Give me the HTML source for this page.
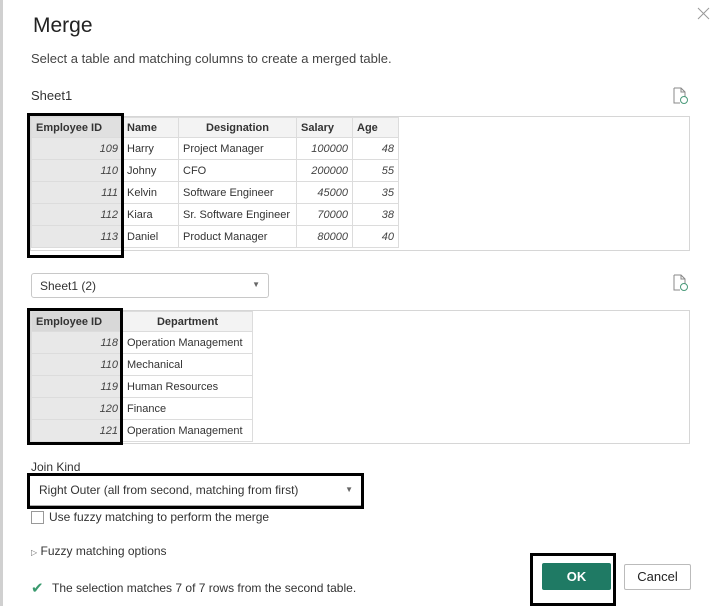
<!DOCTYPE html>
<html><head><meta charset="utf-8"><style>
*{margin:0;padding:0;box-sizing:border-box}
body{width:720px;height:606px;background:#fff;position:relative;overflow:hidden;font-family:"Liberation Sans",sans-serif;color:#333}
.a{position:absolute}
table{border-collapse:collapse;font-size:11px;position:absolute}
td,th{height:22px;border:1px solid #dcdcdc;padding:0 4px;white-space:nowrap}
th{height:20px;background:#f3f3f3;font-weight:bold;text-align:left;color:#333}
td.n{text-align:right;font-style:italic;color:#444}
td.id{background:#e8e8e8;text-align:right;font-style:italic;color:#444}
th.id{background:#e0e0e0}
.hl{position:absolute;border:3px solid #000}
</style></head><body>
<div class="a" style="left:0;top:0;width:3px;height:606px;background:#d0d0d0"></div>
<div class="a" style="left:33px;top:14px;font-size:21px;color:#222;font-weight:500">Merge</div>
<div class="a" style="left:31px;top:51px;font-size:13px;color:#444">Select a table and matching columns to create a merged table.</div>
<div class="a" style="left:31px;top:88px;font-size:13px;color:#333">Sheet1</div>
<svg class="a" style="left:697px;top:7px" width="13" height="13" viewBox="0 0 13 13"><path d="M1 1L12 12M12 1L1 12" stroke="#999" stroke-width="1"/></svg>
<svg class="a" style="left:673px;top:87px" width="16" height="18" viewBox="0 0 16 18"><path d="M1 1h7l4 4v5M1 1v15h6" fill="none" stroke="#888"/><path d="M8 1v4h4" fill="none" stroke="#888"/><circle cx="11" cy="13" r="3.5" fill="none" stroke="#4a9a7a"/></svg>
<svg class="a" style="left:673px;top:274px" width="16" height="18" viewBox="0 0 16 18"><path d="M1 1h7l4 4v5M1 1v15h6" fill="none" stroke="#888"/><path d="M8 1v4h4" fill="none" stroke="#888"/><circle cx="11" cy="13" r="3.5" fill="none" stroke="#4a9a7a"/></svg>

<div class="a" style="left:30px;top:116px;width:660px;height:135px;border:1px solid #d6d6d6"></div>
<table style="left:31px;top:117px">
<tr><th class="id" style="width:91px">Employee ID</th><th style="width:56px">Name</th><th style="width:118px;text-align:center">Designation</th><th style="width:56px">Salary</th><th style="width:46px">Age</th></tr>
<tr><td class="id">109</td><td>Harry</td><td>Project Manager</td><td class="n">100000</td><td class="n">48</td></tr>
<tr><td class="id">110</td><td>Johny</td><td>CFO</td><td class="n">200000</td><td class="n">55</td></tr>
<tr><td class="id">111</td><td>Kelvin</td><td>Software Engineer</td><td class="n">45000</td><td class="n">35</td></tr>
<tr><td class="id">112</td><td>Kiara</td><td>Sr. Software Engineer</td><td class="n">70000</td><td class="n">38</td></tr>
<tr><td class="id">113</td><td>Daniel</td><td>Product Manager</td><td class="n">80000</td><td class="n">40</td></tr>
</table>
<div class="hl" style="left:27px;top:113px;width:97px;height:145px"></div>

<div class="a" style="left:31px;top:273px;width:238px;height:25px;border:1px solid #c8c8c8;border-radius:3px;font-size:12px;padding:5px 8px;color:#333">Sheet1 (2)<span style="position:absolute;right:8px;top:6px;font-size:8px;color:#666">▼</span></div>

<div class="a" style="left:30px;top:310px;width:660px;height:134px;border:1px solid #d6d6d6"></div>
<table style="left:31px;top:311px">
<tr><th class="id" style="width:91px;background:#d8d8d8">Employee ID</th><th style="width:130px;text-align:center">Department</th></tr>
<tr><td class="id">118</td><td>Operation Management</td></tr>
<tr><td class="id">110</td><td>Mechanical</td></tr>
<tr><td class="id">119</td><td>Human Resources</td></tr>
<tr><td class="id">120</td><td>Finance</td></tr>
<tr><td class="id">121</td><td>Operation Management</td></tr>
</table>
<div class="hl" style="left:27px;top:308px;width:96px;height:137px"></div>

<div class="a" style="left:31px;top:460px;font-size:12px;color:#333">Join Kind</div>
<div class="hl" style="left:27px;top:473px;width:337px;height:36px"></div>
<div class="a" style="left:30px;top:476px;width:331px;height:30px;border-bottom:1px solid #aaa;font-size:12px;padding:7px 9px;color:#333">Right Outer (all from second, matching from first)<span style="position:absolute;right:8px;top:9px;font-size:8px;color:#666">▼</span></div>
<div class="a" style="left:31px;top:511px;width:13px;height:13px;border:1px solid #999"></div>
<div class="a" style="left:49px;top:510px;font-size:12px;color:#333">Use fuzzy matching to perform the merge</div>
<div class="a" style="left:31px;top:544px;font-size:12px;color:#333"><span style="font-size:8px;color:#666">▷</span> Fuzzy matching options</div>
<div class="a" style="left:31px;top:579px;font-size:15px;color:#3a9a6e">✔</div>
<div class="a" style="left:52px;top:581px;font-size:12px;color:#333">The selection matches 7 of 7 rows from the second table.</div>

<div class="hl" style="left:530px;top:553px;width:86px;height:53px"></div>
<div class="a" style="left:542px;top:563px;width:69px;height:27px;background:#1f7a64;border-radius:2px;color:#fff;font-size:13px;font-weight:bold;text-align:center;line-height:27px">OK</div>
<div class="a" style="left:624px;top:564px;width:67px;height:26px;border:1px solid #bbb;border-radius:2px;font-size:13px;text-align:center;line-height:24px;color:#222">Cancel</div>
</body></html>
